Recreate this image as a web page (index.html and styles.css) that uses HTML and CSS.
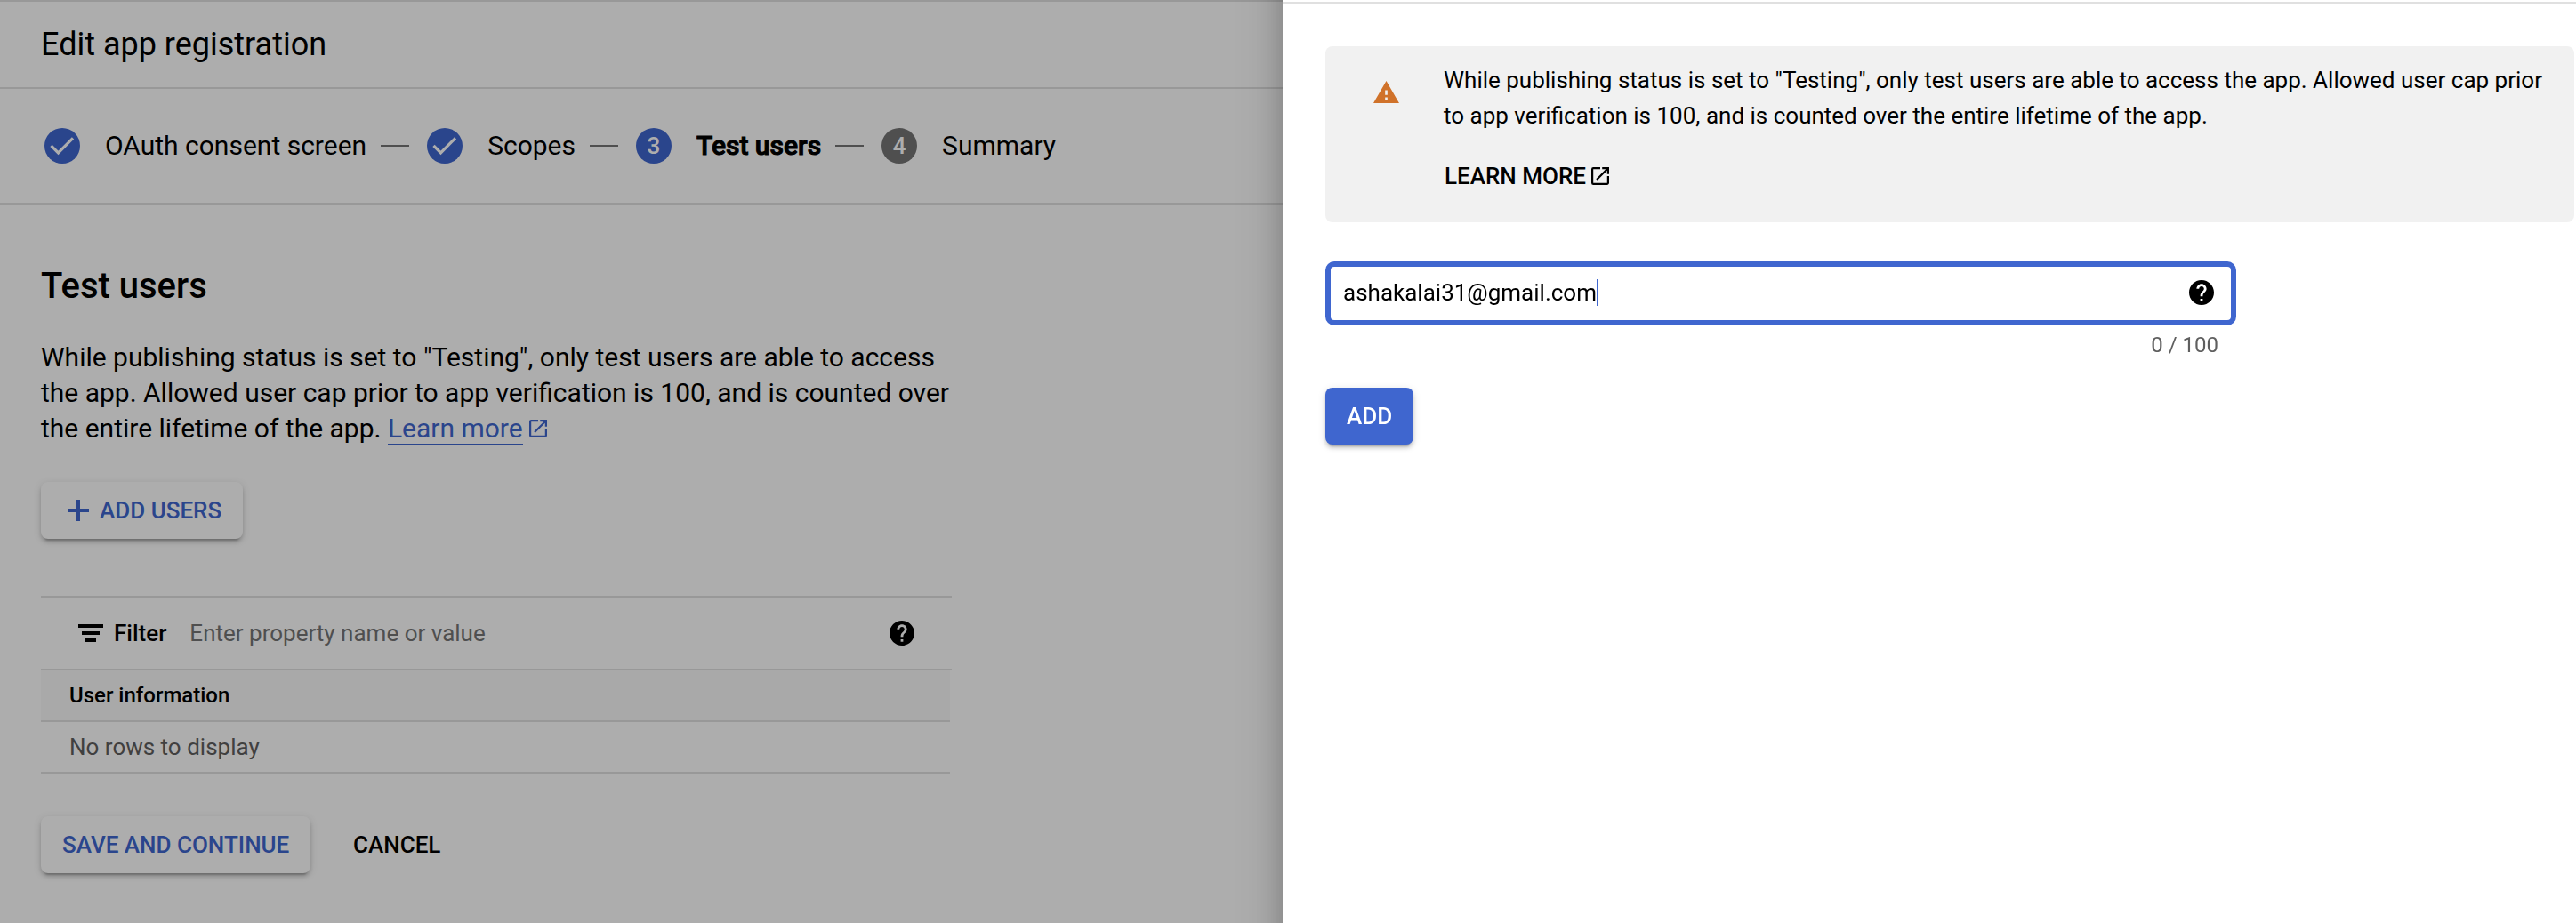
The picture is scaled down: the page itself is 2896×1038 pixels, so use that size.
FILE: index.html
```
<!DOCTYPE html>
<html lang="en">
<head>
<meta charset="utf-8">
<title>Edit app registration</title>
<link rel="stylesheet" href="styles.css">
</head>
<body>
<svg width="0" height="0" class="defs" aria-hidden="true">
  <symbol id="i-check" viewBox="0 0 40 40"><path d="M7.500 19.800l8 8.100L32 11.300" fill="none" stroke="#fff" stroke-width="3.200"/></symbol>
  <symbol id="i-open" viewBox="3 3 18 18"><path d="M19 19H5V5h7V3H5a2 2 0 0 0-2 2v14a2 2 0 0 0 2 2h14c1.100 0 2-.9 2-2v-7h-2v7zM14 3v2h3.590l-9.830 9.830 1.410 1.410L19 6.410V10h2V3h-7z"/></symbol>
  <symbol id="i-help" viewBox="2 2 20 20"><path d="M12 2C6.480 2 2 6.480 2 12s4.480 10 10 10 10-4.480 10-10S17.520 2 12 2zm1 17h-2v-2h2v2zm2.070-7.750l-.9.920C13.450 12.900 13 13.500 13 15h-2v-.5c0-1.100.450-2.100 1.170-2.830l1.240-1.260c.370-.360.590-.860.590-1.410 0-1.100-.9-2-2-2s-2 .9-2 2H8c0-2.210 1.790-4 4-4s4 1.790 4 4c0 .880-.360 1.680-.930 2.250z"/></symbol>
</svg>

<div class="page">
  <header class="titlebar"><h1 class="title">Edit app registration</h1></header>
  <nav class="stepper">
    <span class="dot"><svg><use href="#i-check"/></svg></span><span class="step">OAuth consent screen</span><i class="dash"></i>
    <span class="dot"><svg><use href="#i-check"/></svg></span><span class="step">Scopes</span><i class="dash"></i>
    <span class="dot">3</span><span class="step current">Test users</span><i class="dash"></i>
    <span class="dot todo">4</span><span class="step">Summary</span>
  </nav>
  <main class="content">
    <h2 class="heading">Test users</h2>
    <p class="intro">While publishing status is set to "Testing", only test users are able to access<br>the app. Allowed user cap prior to app verification is 100, and is counted over<br>the entire lifetime of the app. <a class="link">Learn more</a><svg class="open"><use href="#i-open"/></svg></p>
    <button class="btn add-users"><svg class="plus" viewBox="0 0 24 24"><path d="M10 0h4v10h10v4H14v10h-4V14H0v-4h10z"/></svg>ADD USERS</button>
    <section class="table">
      <div class="filter">
        <svg class="bars" viewBox="0 0 28 20"><path d="M0 0h28v4H0zM4 8h20v4H4zM8 16h12v4H8z"/></svg>
        <span class="filter-label">Filter</span>
        <span class="placeholder">Enter property name or value</span>
        <svg class="help"><use href="#i-help"/></svg>
      </div>
      <div class="row head">User information</div>
      <div class="row">No rows to display</div>
    </section>
    <div class="actions">
      <button class="btn">SAVE AND CONTINUE</button>
      <button class="cancel">CANCEL</button>
    </div>
  </main>
</div>

<div class="scrim"></div>

<aside class="drawer">
  <div class="alert">
    <svg class="warn" viewBox="1 2 22 19"><path d="M1 21h22L12 2 1 21zm12-3h-2v-2h2v2zm0-4h-2v-4h2v4z"/></svg>
    <div class="alert-body">
      <p>While publishing status is set to "Testing", only test users are able to access the app. Allowed user cap prior<br>to app verification is 100, and is counted over the entire lifetime of the app.</p>
      <a class="learn">LEARN MORE<svg class="open"><use href="#i-open"/></svg></a>
    </div>
  </div>
  <div class="field"><span class="value">ashakalai31@gmail.com</span><i class="caret"></i><svg class="help"><use href="#i-help"/></svg></div>
  <div class="counter">0 / 100</div>
  <button class="btn primary">ADD</button>
</aside>
</body>
</html>
```
FILE: styles.css
```
* { box-sizing: border-box; }
body {
  margin: 0;
  height: 1038px;
  overflow: hidden;
  background: #fff;
  color: #000;
  font-family: Roboto, "Liberation Sans", sans-serif;
  font-size: 26px;
}
h1, h2, p { margin: 0; }
span, a { white-space: nowrap; }
button {
  font: 500 26px Roboto, "Liberation Sans", sans-serif;
  border: 0;
  background: none;
  padding: 0;
  color: #000;
}
svg { flex: none; fill: currentColor; }
.defs { position: absolute; }

.titlebar {
  height: 100px;
  border-top: 2px solid #e0e0e0;
  border-bottom: 2px solid #e0e0e0;
  padding-left: 46px;
  display: flex;
  align-items: center;
}
.title { font-size: 36px; font-weight: 400; }

.stepper {
  height: 130px;
  border-bottom: 2px solid #e0e0e0;
  padding-left: 50px;
  display: flex;
  align-items: center;
  font-size: 30px;
}
.dot {
  width: 40px;
  height: 40px;
  border-radius: 50%;
  background: #3f66cf;
  color: #fff;
  display: flex;
  align-items: center;
  justify-content: center;
  font-size: 26px;
  font-weight: 500;
}
.dot svg { width: 40px; height: 40px; }
.todo { background: #757575; }
.step { margin-left: 28px; padding-bottom: 1px; }
.current { font-weight: 500; -webkit-text-stroke: 1px #000; }
.dash { width: 32px; height: 2px; background: #757575; margin: 0 20px 0 16px; }

.content { padding: 68px 46px 0; }
.heading { font-size: 40px; font-weight: 500; line-height: 48px; }
.intro { margin-top: 36px; font-size: 30px; line-height: 40px; height: 120px; white-space: nowrap; }
.link { color: #3f66cf; border-bottom: 2px solid #3f66cf; }
.open { width: 20px; height: 20px; }
.intro .open { color: #3f66cf; margin-left: 7px; }

.btn {
  height: 64px;
  padding: 0 24px;
  border-radius: 8px;
  color: #3f66cf;
  background: #fff;
  display: flex;
  align-items: center;
  white-space: nowrap;
  box-shadow: 0 6px 2px -4px rgba(0, 0, 0, .2), 0 4px 4px rgba(0, 0, 0, .14), 0 2px 10px rgba(0, 0, 0, .12);
}
.add-users { margin-top: 40px; width: 227px; padding-left: 30px; }
.plus { width: 24px; height: 24px; margin-right: 12px; }

.table { width: 1024px; margin-top: 64px; }
.filter {
  height: 84px;
  border-top: 2px solid #e0e0e0;
  border-bottom: 2px solid #e0e0e0;
  padding: 0 42px;
  display: flex;
  align-items: center;
}
.bars { width: 28px; height: 20px; margin-right: 12px; }
.filter-label { font-weight: 500; }
.placeholder { margin-left: 26px; color: #757575; }
.help { width: 28px; height: 28px; margin-left: auto; color: #000; }
.row {
  width: 1022px;
  height: 58px;
  padding-left: 32px;
  border-bottom: 2px solid #e0e0e0;
  display: flex;
  align-items: center;
  color: #5f5f5f;
}
.head { background: #fafafa; color: #000; font-size: 24px; font-weight: 500; }
.actions { margin-top: 48px; display: flex; align-items: center; gap: 48px; }
.actions .btn { width: 303px; }

.scrim { position: fixed; inset: 0; background: rgba(0, 0, 0, .32); }

/* Runs past the window at both ends so its side shadow stays even. */
.drawer {
  position: fixed;
  top: -100px;
  right: 0;
  width: 1454px;
  height: 1238px;
  padding: 150px 2px 0 48px;
  background: #fff;
  box-shadow: 0 0 32px rgba(0, 0, 0, .2), 0 0 60px 4px rgba(0, 0, 0, .14);
}
.drawer::before { content: ""; display: block; height: 2px; margin: -48px -2px 48px -48px; background: #e0e0e0; }
.alert {
  height: 198px;
  border-radius: 8px;
  background: #f1f1f1;
  padding: 18px 0 0 54px;
  display: flex;
  align-items: flex-start;
}
.warn { width: 29px; height: 25px; margin-top: 21px; color: #d0722a; }
.alert-body { margin-left: 50px; line-height: 40px; white-space: nowrap; }
.learn { display: flex; align-items: center; font-weight: 500; margin: 28px 0 0 1px; gap: 6px; }
.field {
  margin-top: 44px;
  width: 1024px;
  height: 72px;
  border: 6px solid #3f66cf;
  border-radius: 10px;
  padding: 0 19px 0 14px;
  display: flex;
  align-items: center;
}
.value { padding-bottom: 2px; }
.caret { width: 2px; height: 30px; background: #3f66cf; margin-bottom: 2px; }
.field .help { margin-bottom: 2px; }
.counter { width: 1004px; margin-top: 2px; line-height: 40px; font-size: 24px; text-align: right; color: #5f5f5f; }
.primary { margin-top: 28px; width: 99px; background: #3f66cf; color: #fff; }
```
